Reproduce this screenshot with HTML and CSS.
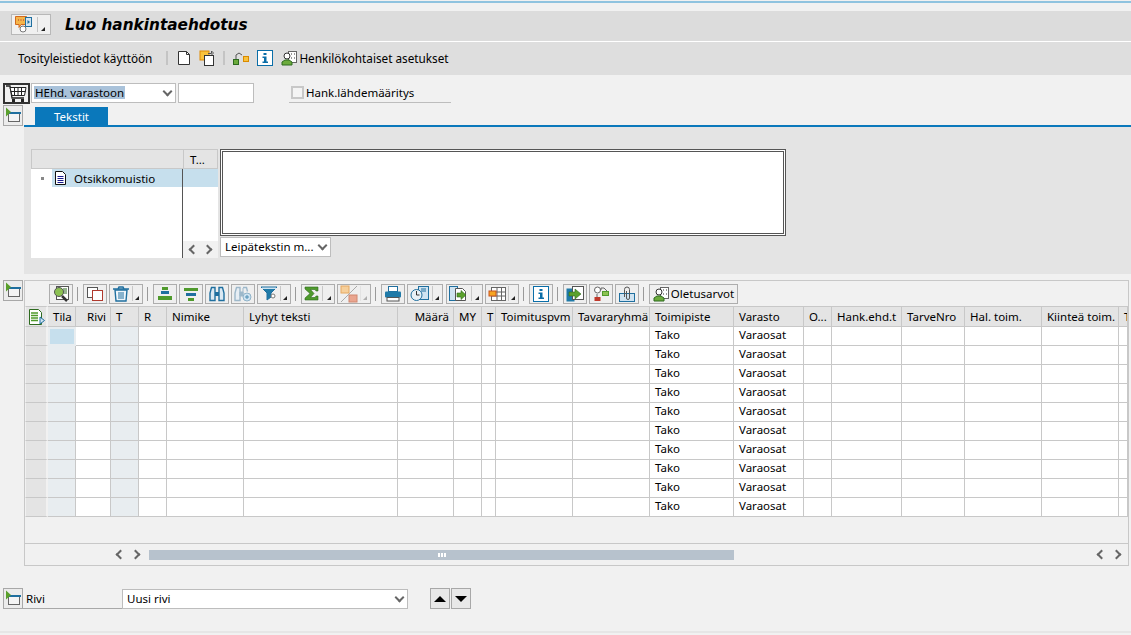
FILE: index.html
```html
<!DOCTYPE html>
<html lang="fi">
<head>
    <meta charset="UTF-8">
    <meta name="viewport" content="width=device-width, initial-scale=1.0">
    <title>Luo hankintaehdotus</title>
    <link rel="stylesheet" href="styles.css">
</head>
<body>

<svg class="defs" width="0" height="0">
    <symbol id="i-expand" viewBox="0 0 18 19">
        <rect x="4.500" y="6.500" width="11" height="9" fill="#f4f4f4" stroke="#666"/>
        <rect x="5" y="6" width="12" height="2" fill="#1f6f9f"/>
        <path d="M2 1.500v9l5-4.500z" fill="#5aa02c"/>
    </symbol>
    <symbol id="i-menu" viewBox="0 0 6 6">
        <path d="M5 1v4H1z" fill="#222"/>
    </symbol>
    <symbol id="i-person" viewBox="0 0 16 16">
        <rect x="7.500" y="1.500" width="8" height="11" fill="#fff" stroke="#666"/>
        <path d="M10 4h1M13 4h1M10 8h1M13 8h1" stroke="#333"/>
        <circle cx="6" cy="6" r="3" fill="#fff" stroke="#333"/>
        <path d="M1 15v-3l3-2h4l3 2v3z" fill="#6cab3c" stroke="#2d6a1f"/>
    </symbol>
    <symbol id="i-info" viewBox="0 0 16 16">
        <rect x=".5" y=".5" width="15" height="15" fill="#fff" stroke="#0a6ea8"/>
        <path d="M6.500 3h3v2h-3zM5.500 6.500h4V11.500h1.500V13H5.500v-1.500H7v-3.500H5.500z" fill="#0a6ea8"/>
    </symbol>
</svg>

<div class="top-line"></div>

<div class="title-bar">
    <div class="title-btn">
        <svg width="18" height="17" viewBox="0 0 18 17">
            <path d="M.5.5h11v8H6l-2 3v-3H.5z" fill="#f5b54a" stroke="#d2691e"/>
            <path d="M3 4h1M5.500 4h1M8 4h1" stroke="#a33"/>
            <rect x="10.500" y="1.500" width="6" height="9" fill="#cfe3f1" stroke="#1f6f9f"/>
            <path d="M12.500 4l2.500 2-2.500 2z" fill="#1f6f9f"/>
            <circle cx="8" cy="13" r="3" fill="#fff" stroke="#777"/>
        </svg>
        <span class="title-btn-menu"><svg width="6" height="6"><use href="#i-menu"/></svg></span>
    </div>
    <h1>Luo hankintaehdotus</h1>
</div>

<div class="app-toolbar">
    <span class="app-link">Tosityleistiedot käyttöön</span>
    <span class="app-sep"></span>
    <svg class="app-icon" width="14" height="15" viewBox="0 0 14 15">
        <path d="M1.500 1.500h8l3 3v10h-11z" fill="#fff" stroke="#333"/>
        <path d="M9.500 1.500v3h3" fill="none" stroke="#333"/>
    </svg>
    <svg class="app-icon app-icon-gap" width="16" height="16" viewBox="0 0 16 16">
        <rect x="1" y="1" width="9" height="9" fill="#f9c23c" stroke="#e08a00"/>
        <rect x="5.500" y="5.500" width="9" height="10" fill="#fff" stroke="#333"/>
        <path d="M9 3.500h3.500V1M12.500 1l2 2-2 2" fill="none" stroke="#555"/>
    </svg>
    <span class="app-sep app-sep-narrow"></span>
    <svg class="app-icon" width="16" height="14" viewBox="0 0 16 14">
        <rect x=".5" y="8.500" width="5" height="5" fill="#6cab3c" stroke="#2d6a1f"/>
        <rect x="10.500" y="5.500" width="5" height="5" fill="#f9c23c" stroke="#d98a00"/>
        <path d="M3 8V4l3-2 3 2" fill="none" stroke="#555"/>
    </svg>
    <svg class="app-icon app-icon-gap" width="16" height="16"><use href="#i-info"/></svg>
    <svg class="app-icon app-icon-gap" width="16" height="16"><use href="#i-person"/></svg>
    <span class="app-link app-link-tight">Henkilökohtaiset asetukset</span>
</div>

<div class="select-row">
    <button class="cart-btn">
        <svg width="21" height="18" viewBox="0 0 21 18">
            <path d="M0 1h4l2 12h12" fill="none" stroke="#222" stroke-width="1.300"/>
            <path d="M4 2.500h16l-1.500 8H6zM8.500 2.500v8M12 2.500v8M15.500 2.500v8M5 6.500h14.500" fill="#fff" stroke="#222"/>
            <rect x="6" y="14" width="3" height="3" fill="#222"/>
            <rect x="15" y="14" width="3" height="3" fill="#222"/>
        </svg>
    </button>
    <div class="combo combo-doc">
        <span class="combo-value"><span class="selected">HEhd. varastoon</span></span>
        <span class="chevron"></span>
    </div>
    <div class="field"></div>
    <label class="check-label"><span class="check"></span>Hank.lähdemääritys</label>
</div>

<section class="tab-section">
    <button class="expand-btn"><svg width="18" height="19"><use href="#i-expand"/></svg></button>
    <div class="tab-strip"><span class="tab">Tekstit</span></div>
</section>

<div class="text-panel">
    <div class="tree">
        <div class="tree-col tree-main">
            <div class="tree-head"></div>
            <div class="tree-body">
                <div class="tree-row">
                    <span class="bullet"></span>
                    <span class="tree-item">
                        <svg width="13" height="14" viewBox="0 0 13 14">
                            <path d="M1.500.5h7l3 3v10h-10z" fill="#fff" stroke="#111"/>
                            <path d="M3.500 5.500h6M3.500 7.500h6M3.500 9.500h6M3.500 11.500h6" stroke="#1a1a8c"/>
                        </svg>
                        Otsikkomuistio
                    </span>
                </div>
            </div>
        </div>
        <div class="tree-col tree-side">
            <div class="tree-head tree-head-t">T...</div>
            <div class="tree-row tree-row-side"></div>
            <div class="tree-scroll"><span class="arrow-left"></span><span class="arrow-right"></span></div>
        </div>
    </div>
    <div class="editor">
        <div class="editor-box"></div>
        <div class="combo combo-format">
            <span class="combo-value">Leipätekstin m...</span>
            <span class="chevron"></span>
        </div>
    </div>
</div>

<section class="grid-section">
    <button class="expand-btn"><svg width="18" height="19"><use href="#i-expand"/></svg></button>
    <div class="grid-box">
        <div class="grid-toolbar">
            <button class="tb-btn"><svg width="18" height="18" viewBox="0 0 18 18">
                <rect x="4.500" y="1.500" width="12" height="13" fill="#fff" stroke="#555"/>
                <path d="M11 4h4M11 6h4M11 8h4" stroke="#2d6a1f"/>
                <circle cx="7" cy="7" r="4.500" fill="#8cc152" stroke="#555"/>
                <path d="M10 11l5 5" stroke="#333" stroke-width="2.500"/>
            </svg></button>
            <span class="tb-sep"></span>
            <button class="tb-btn"><svg width="16" height="14" viewBox="0 0 16 14">
                <rect x=".5" y=".5" width="10" height="10" fill="#fff" stroke="#555"/>
                <rect x="5.500" y="3.500" width="10" height="10" fill="#fff" stroke="#b03a2e"/>
            </svg></button>
            <button class="tb-btn tb-menu"><svg width="18" height="16" viewBox="0 0 18 16">
                <path d="M1 3h16M6 3l1-2h4l1 2" fill="none" stroke="#1f6f9f" stroke-width="1.500"/>
                <path d="M3 4l1 11h10l1-11z" fill="#eef5fa" stroke="#1f6f9f" stroke-width="1.400"/>
                <path d="M7 6v7M9 6v7M11 6v7" stroke="#1f6f9f"/>
            </svg><span class="menu-mark"><svg width="6" height="6"><use href="#i-menu"/></svg></span></button>
            <span class="tb-sep"></span>
            <button class="tb-btn"><svg width="14" height="14" viewBox="0 0 14 14">
                <rect x="4" y="0" width="6" height="3" fill="#4f9a2c"/>
                <rect x="3" y="4" width="8" height="3" fill="#1f6f9f"/>
                <rect x="0" y="9" width="14" height="4" fill="#4f9a2c"/>
            </svg></button>
            <button class="tb-btn"><svg width="14" height="14" viewBox="0 0 14 14">
                <rect x="0" y="1" width="14" height="3" fill="#4f9a2c"/>
                <rect x="2" y="6" width="10" height="3" fill="#1f6f9f"/>
                <rect x="4" y="11" width="6" height="3" fill="#4f9a2c"/>
            </svg></button>
            <button class="tb-btn"><svg width="16" height="16" viewBox="0 0 16 16">
                <path d="M2.500 1.500h3.500v13H1V7zM10 1.500h3.500L15 7v7.500h-5z" fill="#dbe9f3" stroke="#1f6f9f" stroke-width="1.400"/>
                <path d="M6 6h4v4H6z" fill="#1f6f9f"/>
            </svg></button>
            <button class="tb-btn"><svg width="18" height="16" viewBox="0 0 18 16">
                <path d="M2.500 1.500h3.500v13H1V7zM9 1.500h3.500l1 4" fill="#e7eef4" stroke="#9db8ca" stroke-width="1.400"/>
                <path d="M6 6h3v4H6zM9 2v6" stroke="#9db8ca" fill="#9db8ca"/>
                <circle cx="13" cy="11" r="4" fill="#cfe3f1" stroke="#8fb3c9"/>
                <path d="M13 9v4M11 11h4" stroke="#4f8fb3"/>
            </svg></button>
            <button class="tb-btn tb-menu"><svg width="18" height="16" viewBox="0 0 18 16">
                <path d="M1 1h16l-6 6v4l-4 3V7z" fill="#1f7aa8" stroke="#1f6f9f"/>
                <rect x="2" y="1.500" width="14" height="1.500" fill="#cfe3f1"/>
                <circle cx="13" cy="10" r="2" fill="#fff" stroke="#777"/>
            </svg><span class="menu-mark"><svg width="6" height="6"><use href="#i-menu"/></svg></span></button>
            <span class="tb-sep"></span>
            <button class="tb-btn tb-menu"><svg width="16" height="15" viewBox="0 0 16 15">
                <path d="M1 1h13v4h-2l-1-1.500H6.500L10 7.500l-3.500 4H11l1-1.500h2v4H1v-2l5-4.500-5-4.500z" fill="#4f9a2c" stroke="#2d6a1f" stroke-width=".6"/>
            </svg><span class="menu-mark"><svg width="6" height="6"><use href="#i-menu"/></svg></span></button>
            <button class="tb-btn tb-menu tb-disabled"><svg width="18" height="18" viewBox="0 0 18 18">
                <rect x="1" y="1" width="8" height="7" fill="#f6cf9a" stroke="#e6a860"/>
                <rect x="9" y="10" width="8" height="7" fill="#eaa58f" stroke="#d08870"/>
                <path d="M1 17L17 1" stroke="#aaa"/>
            </svg><span class="menu-mark menu-mark-off"><svg width="6" height="6"><use href="#i-menu"/></svg></span></button>
            <span class="tb-sep"></span>
            <button class="tb-btn"><svg width="18" height="16" viewBox="0 0 18 16">
                <rect x="4.500" y=".5" width="9" height="5" fill="#fff" stroke="#1f6f9f"/>
                <rect x="1" y="5.500" width="16" height="6" rx="1" fill="#1f7aa8"/>
                <rect x="3" y="11.500" width="12" height="3.500" fill="#fff" stroke="#555"/>
            </svg></button>
            <button class="tb-btn tb-menu tb-clock"><svg width="20" height="16" viewBox="0 0 20 16">
                <rect x="8.500" y=".5" width="10" height="13" fill="#cfe3f1" stroke="#1f6f9f"/>
                <path d="M11 3h5M11 5h5" stroke="#1f6f9f"/>
                <circle cx="6.500" cy="9" r="5.500" fill="#e9f1f6" stroke="#1f6f9f"/>
                <path d="M6.500 5v4h3" fill="none" stroke="#333"/>
            </svg><span class="menu-mark"><svg width="6" height="6"><use href="#i-menu"/></svg></span></button>
            <button class="tb-btn tb-menu tb-export"><svg width="20" height="16" viewBox="0 0 20 16">
                <rect x=".5" y=".5" width="8" height="14" fill="#cfe3f1" stroke="#1f6f9f"/>
                <path d="M6.500 2.500h7l3 3v9h-10z" fill="#fff" stroke="#555"/>
                <path d="M8 7h4V4.500L17 9l-5 4.500V11H8z" fill="#5aa02c" stroke="#2d6a1f" stroke-width=".6"/>
            </svg><span class="menu-mark"><svg width="6" height="6"><use href="#i-menu"/></svg></span></button>
            <button class="tb-btn tb-menu"><svg width="18" height="16" viewBox="0 0 18 16">
                <rect x="3.500" y="1.500" width="14" height="13" fill="#fff" stroke="#666"/>
                <path d="M3.500 6h14M3.500 10h14M9 1.500v13M13.500 1.500v13" stroke="#666"/>
                <rect x="1" y="5" width="7" height="5" fill="#f5a623" stroke="#c9531e"/>
            </svg><span class="menu-mark"><svg width="6" height="6"><use href="#i-menu"/></svg></span></button>
            <span class="tb-sep"></span>
            <button class="tb-btn"><svg width="16" height="16"><use href="#i-info"/></svg></button>
            <span class="tb-sep"></span>
            <button class="tb-btn"><svg width="18" height="16" viewBox="0 0 18 16">
                <rect x=".5" y="2.500" width="8" height="13" fill="#1f7aa8"/>
                <rect x="6.500" y=".5" width="11" height="13" fill="#fff" stroke="#555"/>
                <path d="M3 6h6V3l6 5-6 5v-3H3z" fill="#5aa02c" stroke="#2d6a1f" stroke-width=".6"/>
            </svg></button>
            <button class="tb-btn"><svg width="16" height="16" viewBox="0 0 16 16">
                <circle cx="4.500" cy="4" r="3" fill="#fff" stroke="#666"/>
                <path d="M8 4V2h3l3 3" fill="none" stroke="#666"/>
                <rect x="9.500" y="5.500" width="6" height="4" fill="#8cc152" stroke="#4f9a2c"/>
                <path d="M4 8v3" stroke="#666"/>
                <rect x="1.500" y="11" width="6" height="4" fill="#c0392b"/>
            </svg></button>
            <button class="tb-btn"><svg width="16" height="16" viewBox="0 0 16 16">
                <rect x=".5" y="7.500" width="15" height="8" fill="#cfe3f1" stroke="#1f6f9f"/>
                <path d="M5.500 11V3.500a2.500 2.500 0 0 1 5 0V12a1.500 1.500 0 0 1-3 0V5" fill="none" stroke="#555"/>
            </svg></button>
            <span class="tb-sep"></span>
            <button class="tb-btn tb-text"><svg width="16" height="16"><use href="#i-person"/></svg>Oletusarvot</button>
        </div>

        <table class="grid-table">
            <colgroup>
                <col style="width:23px"><col style="width:28px"><col style="width:35px"><col style="width:28px"><col style="width:28px">
                <col style="width:77px"><col style="width:154px"><col style="width:56px"><col style="width:28px"><col style="width:14px">
                <col style="width:77px"><col style="width:77px"><col style="width:84px"><col style="width:70px"><col style="width:28px">
                <col style="width:70px"><col style="width:63px"><col style="width:77px"><col style="width:77px"><col style="width:9px">
            </colgroup>
            <thead>
                <tr>
                    <th class="sel-head"><svg width="16" height="16" viewBox="0 0 16 16">
                        <path d="M.5.5h9l3 3v12H.5z" fill="#fff" stroke="#2d6a1f"/>
                        <path d="M2 4h7M2 6.500h7M2 9h7M2 11.500h7" stroke="#4f9a2c" stroke-width="1.400"/>
                        <path d="M11 8l4.500 3.500L11 15z" fill="#cfe3f1" stroke="#1f6f9f"/>
                    </svg></th>
                    <th>Tila</th><th class="num">Rivi</th><th>T</th><th>R</th>
                    <th>Nimike</th><th>Lyhyt teksti</th><th class="num">Määrä</th><th>MY</th><th>T</th>
                    <th>Toimituspvm</th><th>Tavararyhmä</th><th>Toimipiste</th><th>Varasto</th><th>O...</th>
                    <th>Hank.ehd.t</th><th>TarveNro</th><th>Hal. toim.</th><th>Kiinteä toim.</th><th>T</th>
                </tr>
            </thead>
            <tbody>
                <tr><td class="sel"></td><td class="ro focus"></td><td></td><td class="ro"></td><td></td><td></td><td></td><td></td><td></td><td></td><td></td><td></td><td>Tako</td><td>Varaosat</td><td></td><td></td><td></td><td></td><td></td><td></td></tr>
                <tr><td class="sel"></td><td class="ro"></td><td></td><td class="ro"></td><td></td><td></td><td></td><td></td><td></td><td></td><td></td><td></td><td>Tako</td><td>Varaosat</td><td></td><td></td><td></td><td></td><td></td><td></td></tr>
                <tr><td class="sel"></td><td class="ro"></td><td></td><td class="ro"></td><td></td><td></td><td></td><td></td><td></td><td></td><td></td><td></td><td>Tako</td><td>Varaosat</td><td></td><td></td><td></td><td></td><td></td><td></td></tr>
                <tr><td class="sel"></td><td class="ro"></td><td></td><td class="ro"></td><td></td><td></td><td></td><td></td><td></td><td></td><td></td><td></td><td>Tako</td><td>Varaosat</td><td></td><td></td><td></td><td></td><td></td><td></td></tr>
                <tr><td class="sel"></td><td class="ro"></td><td></td><td class="ro"></td><td></td><td></td><td></td><td></td><td></td><td></td><td></td><td></td><td>Tako</td><td>Varaosat</td><td></td><td></td><td></td><td></td><td></td><td></td></tr>
                <tr><td class="sel"></td><td class="ro"></td><td></td><td class="ro"></td><td></td><td></td><td></td><td></td><td></td><td></td><td></td><td></td><td>Tako</td><td>Varaosat</td><td></td><td></td><td></td><td></td><td></td><td></td></tr>
                <tr><td class="sel"></td><td class="ro"></td><td></td><td class="ro"></td><td></td><td></td><td></td><td></td><td></td><td></td><td></td><td></td><td>Tako</td><td>Varaosat</td><td></td><td></td><td></td><td></td><td></td><td></td></tr>
                <tr><td class="sel"></td><td class="ro"></td><td></td><td class="ro"></td><td></td><td></td><td></td><td></td><td></td><td></td><td></td><td></td><td>Tako</td><td>Varaosat</td><td></td><td></td><td></td><td></td><td></td><td></td></tr>
                <tr><td class="sel"></td><td class="ro"></td><td></td><td class="ro"></td><td></td><td></td><td></td><td></td><td></td><td></td><td></td><td></td><td>Tako</td><td>Varaosat</td><td></td><td></td><td></td><td></td><td></td><td></td></tr>
                <tr><td class="sel"></td><td class="ro"></td><td></td><td class="ro"></td><td></td><td></td><td></td><td></td><td></td><td></td><td></td><td></td><td>Tako</td><td>Varaosat</td><td></td><td></td><td></td><td></td><td></td><td></td></tr>
            </tbody>
        </table>

        <div class="grid-empty"></div>

        <div class="grid-scroll">
            <span class="arrow-left"></span><span class="arrow-right"></span>
            <div class="scroll-thumb"><span class="grip"></span></div>
            <span class="scroll-rest"></span>
            <span class="arrow-left"></span><span class="arrow-right"></span>
        </div>
    </div>
</section>

<div class="bottom-row">
    <button class="expand-btn"><svg width="18" height="19"><use href="#i-expand"/></svg></button>
    <span class="bottom-label">Rivi</span>
    <div class="combo combo-row">
        <span class="combo-value">Uusi rivi</span>
        <span class="chevron"></span>
    </div>
    <button class="step-btn step-first"><span class="tri-up"></span></button>
    <button class="step-btn"><span class="tri-down"></span></button>
</div>

<div class="bottom-line"></div>

</body>
</html>
```

FILE: styles.css
```css
html, body {
    height: 635px;
    overflow: hidden;
}
body {
    margin: 0;
    background-color: #f1f1f1;
    color: #000;
    font-family: "Noto Sans", Arial, sans-serif;
    font-size: 11.5px;
}
button {
    padding: 0;
    font: inherit;
    color: inherit;
}
.defs {
    display: block;
    height: 0;
}
.top-line {
    height: 2px;
    margin-top: 1px;
    background-color: #8fc3df;
}

/* title and app toolbar */
.title-bar {
    display: flex;
    align-items: center;
    box-sizing: border-box;
    height: 30px;
    margin-top: 8px;
    padding: 0 0 3px 11px;
    background-color: #dcdcdc;
}
.title-btn {
    display: flex;
    align-items: center;
    box-sizing: border-box;
    width: 40px;
    height: 21px;
    padding-left: 3px;
    border: 1px solid #b8b8b8;
    background-color: #f0f0f0;
}
.title-btn-menu {
    display: flex;
    align-items: flex-end;
    justify-content: flex-end;
    height: 15px;
    width: 12px;
    margin-left: 4px;
    padding-right: 3px;
    box-sizing: border-box;
    border-left: 1px solid #c4c4c4;
}
.title-bar h1 {
    margin: 0 0 0 14px;
    color: #000;
    font-family: "DejaVu Sans", Verdana, sans-serif;
    font-size: 15.3px;
    font-style: italic;
    font-weight: bold;
}
.app-toolbar {
    display: flex;
    align-items: center;
    box-sizing: content-box;
    height: 31px;
    padding: 0 0 2px 18px;
    border-top: 1px solid #fff;
    background-color: #dedede;
    font-size: 11.75px;
}
.app-sep {
    width: 2px;
    height: 14px;
    margin: 0 9px 0 14px;
    background-color: #c4c4c4;
}
.app-sep-narrow {
    margin: 0 8px;
}
.app-icon {
    flex: none;
}
.app-icon-gap {
    margin-left: 8px;
}
.app-link-tight {
    margin-left: 2px;
}

/* top selection row */
.select-row {
    display: flex;
    align-items: flex-start;
    height: 22px;
    margin-top: 8px;
    padding-left: 3px;
}
.cart-btn {
    display: flex;
    align-items: center;
    justify-content: center;
    box-sizing: border-box;
    width: 27px;
    height: 21px;
    border: 2px solid #333;
    background-color: #f1f1f1;
}
.combo {
    display: flex;
    align-items: center;
    box-sizing: border-box;
    padding-bottom: 1px;
    border: 1px solid #bdbdbd;
    background-color: #fff;
}
.combo-value {
    flex: 1;
    overflow: hidden;
    white-space: nowrap;
}
.chevron {
    flex: none;
    width: 5px;
    height: 5px;
    margin: 0 4px 3px 0;
    border-right: 2px solid #666;
    border-bottom: 2px solid #666;
    transform: rotate(45deg);
}
.combo-doc {
    width: 145px;
    height: 20px;
    margin-left: 1px;
    padding-left: 2px;
}
.selected {
    display: inline-block;
    padding: 0 1px;
    height: 13px;
    line-height: 13px;
    background-color: #a9c2da;
}
.field {
    box-sizing: border-box;
    width: 76px;
    height: 20px;
    margin-left: 2px;
    border: 1px solid #bdbdbd;
    background-color: #fff;
}
.check-label {
    display: flex;
    align-items: center;
    box-sizing: border-box;
    width: 162px;
    height: 20px;
    margin-left: 35px;
    padding-left: 2px;
    border-bottom: 1px solid #bdbdbd;
}
.check {
    box-sizing: border-box;
    width: 13px;
    height: 13px;
    margin-right: 2px;
    border: 2px solid #c8c8c8;
    background-color: #f4f4f4;
}

/* tabs */
.expand-btn {
    display: flex;
    flex: none;
    align-items: center;
    justify-content: center;
    box-sizing: border-box;
    width: 20px;
    height: 21px;
    border: 1px solid #a8a8a8;
    background-color: #ececec;
}
.tab-section {
    display: flex;
    height: 22px;
    padding-left: 3px;
}
.tab-strip {
    flex: 1;
    display: flex;
    align-items: flex-end;
    box-sizing: border-box;
    height: 22px;
    margin-left: 1px;
    padding-left: 11px;
    border-bottom: 2px solid #0a78bb;
}
.tab {
    display: block;
    width: 73px;
    height: 18px;
    line-height: 20px;
    text-align: center;
    color: #fff;
    background-color: #0a78bb;
}

/* text panel */
.text-panel {
    display: flex;
    align-items: flex-start;
    height: 147px;
    box-sizing: border-box;
    margin-left: 24px;
    padding: 22px 0 0 7px;
    background-color: #e4e4e4;
}
.tree {
    display: flex;
    height: 109px;
    background-color: #fff;
}
.tree-col {
    display: flex;
    flex-direction: column;
}
.tree-main {
    width: 152px;
}
.tree-body {
    flex: 1;
    border-right: 1px solid #555;
}
.tree-side {
    width: 35px;
}
.tree-head {
    box-sizing: border-box;
    height: 20px;
    border-top: 1px solid #c8c8c8;
    border-bottom: 1px solid #c8c8c8;
    border-left: 1px solid #c8c8c8;
    background-color: #e4e4e4;
}
.tree-head-t {
    padding-left: 6px;
    line-height: 19px;
    border-right: 1px solid #c8c8c8;
}
.tree-row {
    display: flex;
    align-items: center;
    height: 18px;
}
.tree-row-side {
    background-color: #c6dfed;
}
.bullet {
    width: 3px;
    height: 3px;
    margin: 0 8px 0 10px;
    background-color: #888;
}
.tree-item {
    flex: 1;
    display: flex;
    align-items: center;
    gap: 7px;
    height: 18px;
    padding-left: 2px;
    background-color: #c6dfed;
}
.tree-scroll {
    display: flex;
    align-items: center;
    justify-content: center;
    gap: 7px;
    height: 17px;
    margin-top: auto;
    background-color: #f1f1f1;
}
.arrow-left, .arrow-right {
    flex: none;
    width: 5px;
    height: 5px;
    border-bottom: 2px solid #666;
}
.arrow-left {
    border-left: 2px solid #666;
    transform: rotate(45deg);
}
.arrow-right {
    border-right: 2px solid #666;
    transform: rotate(-45deg);
}
.editor {
    display: flex;
    flex-direction: column;
    margin-left: 2px;
}
.editor-box {
    box-sizing: border-box;
    width: 566px;
    height: 87px;
    border: 3px double #555;
    background-color: #fff;
}
.combo-format {
    width: 111px;
    height: 20px;
    margin-top: 1px;
    padding-left: 4px;
}

/* grid */
.grid-section {
    display: flex;
    margin-top: 6px;
    padding-left: 3px;
}
.grid-box {
    box-sizing: border-box;
    width: 1105px;
    height: 286px;
    margin-left: 1px;
    display: flex;
    flex-direction: column;
    border: 1px solid #c8c8c8;
    overflow: hidden;
}
.grid-toolbar {
    display: flex;
    align-items: center;
    gap: 2px;
    height: 25px;
    flex: none;
    padding-left: 24px;
}
.tb-btn {
    display: flex;
    align-items: center;
    justify-content: center;
    flex: none;
    box-sizing: border-box;
    width: 24px;
    height: 20px;
    border: 1px solid #adadad;
    background-color: #efefef;
}
.tb-menu {
    justify-content: flex-start;
    width: 34px;
    padding-left: 2px;
}
.tb-clock {
    width: 36px;
}
.tb-export {
    width: 37px;
    margin-left: 1px;
}
.menu-mark {
    display: flex;
    align-items: flex-end;
    justify-content: flex-end;
    flex: 1;
    height: 15px;
    margin-left: 2px;
    padding-right: 2px;
    border-left: 1px solid #c8c8c8;
}
.menu-mark-off {
    opacity: .3;
}
.tb-text {
    width: 89px;
    gap: 2px;
}
.tb-sep {
    flex: none;
    width: 1px;
    height: 14px;
    margin: 0 3px 0 2px;
    background-color: #9a9a9a;
}
.grid-table {
    flex: none;
    width: 1103px;
    table-layout: fixed;
    border-collapse: separate;
    border-spacing: 0;
    background-color: #fff;
}
.grid-table th {
    box-sizing: border-box;
    height: 21px;
    padding: 0 0 0 5px;
    overflow: hidden;
    border-top: 1px solid #c8c8c8;
    border-bottom: 1px solid #c8c8c8;
    border-right: 1px solid #c8c8c8;
    background-color: #e4e4e4;
    font-weight: normal;
    line-height: 15px;
    text-align: left;
    white-space: nowrap;
}
.grid-table th.num {
    padding: 0 4px 0 0;
    text-align: right;
}
.grid-table th.sel-head {
    padding: 1px 0 0 3px;
    border-left: 1px solid #f1f1f1;
    border-right: 2px solid #f1f1f1;
}
.sel-head svg {
    display: block;
}
.grid-table td {
    box-sizing: border-box;
    height: 19px;
    padding: 0 0 0 5px;
    border-right: 1px solid #c8c8c8;
    border-bottom: 1px solid #c8c8c8;
    line-height: 15px;
    vertical-align: top;
}
.grid-table td.sel {
    border-left: 1px solid #f1f1f1;
    border-right: 2px solid #f1f1f1;
    background-color: #e4e4e4;
}
.grid-table td.ro {
    background-color: #e8edf0;
}
.grid-table td.focus {
    outline: 2px solid #e8edf0;
    outline-offset: -2px;
    background-color: #c6dfed;
}
.grid-empty {
    flex: none;
    height: 27px;
    box-sizing: border-box;
    border-bottom: 1px solid #c8c8c8;
}
.grid-scroll {
    flex: 1;
    display: flex;
    align-items: center;
    gap: 8px;
    padding-left: 92px;
    padding-right: 8px;
}
.scroll-thumb {
    display: flex;
    flex: none;
    align-items: center;
    justify-content: center;
    width: 585px;
    height: 10px;
    margin-left: 2px;
    background-color: #b7c2cd;
}
.grip {
    width: 8px;
    height: 4px;
    background: repeating-linear-gradient(90deg, #fff 0 2px, transparent 2px 3px);
}
.scroll-rest {
    flex: 1;
}

/* bottom row */
.bottom-row {
    display: flex;
    align-items: flex-start;
    height: 21px;
    margin-top: 22px;
    padding-left: 3px;
}
.bottom-label {
    box-sizing: border-box;
    width: 99px;
    height: 21px;
    padding: 3px 0 0 3px;
    border-bottom: 1px solid #a8a8a8;
}
.combo-row {
    width: 286px;
    height: 20px;
    margin-top: 1px;
    padding-left: 4px;
}
.step-btn {
    display: flex;
    align-items: center;
    justify-content: center;
    box-sizing: border-box;
    width: 20px;
    height: 21px;
    margin-left: 1px;
    border: 1px solid #a8a8a8;
    background-color: #e8e8e8;
}
.step-first {
    margin-left: 22px;
}
.tri-up, .tri-down {
    width: 0;
    height: 0;
    border-left: 6px solid transparent;
    border-right: 6px solid transparent;
}
.tri-up {
    border-bottom: 6px solid #000;
}
.tri-down {
    border-top: 6px solid #000;
}
.bottom-line {
    height: 2px;
    margin-top: 22px;
    background-color: #e6e6e6;
}
```
